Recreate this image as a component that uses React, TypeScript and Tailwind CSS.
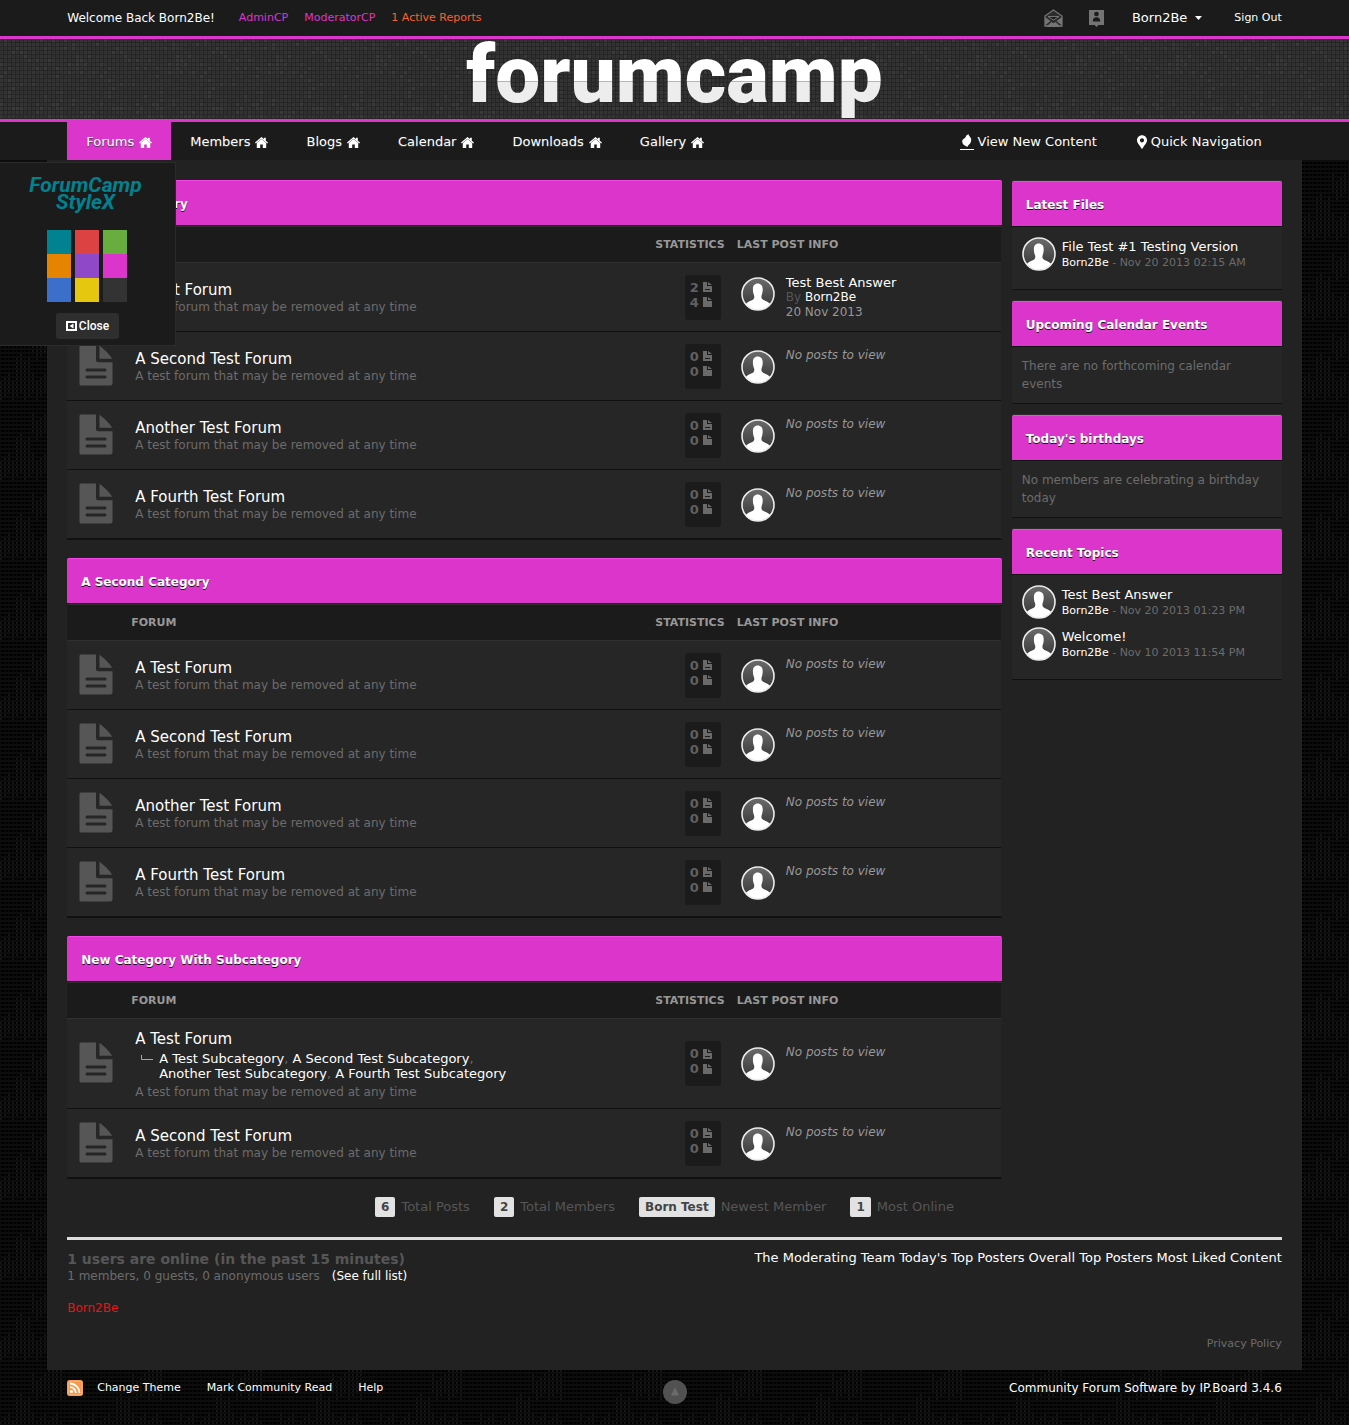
import type { ReactNode } from "react";
import { FaMapMarkerAlt } from "react-icons/fa";

interface Forum {
  name: string;
  subs?: string[];
  topics?: number;
  replies?: number;
  lastPost?: { title: string; author: string; date: string };
}

interface Category {
  title: string;
  forums: Forum[];
}

const DESCRIPTION = "A test forum that may be removed at any time";

const CATEGORIES: Category[] = [
  {
    title: "A Test Category",
    forums: [
      {
        name: "A Test Forum",
        topics: 2,
        replies: 4,
        lastPost: { title: "Test Best Answer", author: "Born2Be", date: "20 Nov 2013" },
      },
      { name: "A Second Test Forum" },
      { name: "Another Test Forum" },
      { name: "A Fourth Test Forum" },
    ],
  },
  {
    title: "A Second Category",
    forums: [
      { name: "A Test Forum" },
      { name: "A Second Test Forum" },
      { name: "Another Test Forum" },
      { name: "A Fourth Test Forum" },
    ],
  },
  {
    title: "New Category With Subcategory",
    forums: [
      {
        name: "A Test Forum",
        subs: [
          "A Test Subcategory",
          "A Second Test Subcategory",
          "Another Test Subcategory",
          "A Fourth Test Subcategory",
        ],
      },
      { name: "A Second Test Forum" },
    ],
  },
];

const NAV = ["Forums", "Members", "Blogs", "Calendar", "Downloads", "Gallery"];

const SWATCHES = [
  { name: "Teal", color: "bg-[#008290]" },
  { name: "Red", color: "bg-[#dc4242]" },
  { name: "Green", color: "bg-[#67ae3e]" },
  { name: "Orange", color: "bg-[#e68400]" },
  { name: "Purple", color: "bg-[#8f48c8]" },
  { name: "Pink", color: "bg-[#dc35cc]" },
  { name: "Blue", color: "bg-[#3c6fc9]" },
  { name: "Yellow", color: "bg-[#e6c70f]" },
  { name: "Dark", color: "bg-[#333333]" },
];

const STATS = [
  { value: "6", label: "Total Posts" },
  { value: "2", label: "Total Members" },
  { value: "Born Test", label: "Newest Member" },
  { value: "1", label: "Most Online" },
];

// Cheap repeatable noise for the two textures
function noise(x: number, y: number) {
  const n = Math.sin(x * 12.9898 + y * 78.233) * 43758.5453;
  return n - Math.floor(n);
}

const CELLS = Array.from({ length: 25 * 20 }, (_, i) => ({ x: i % 25, y: Math.floor(i / 25) }));

function HeaderTexture() {
  return (
    <svg className="absolute inset-0 w-full h-full" aria-hidden="true">
      <defs>
        <pattern id="tiles" width="100" height="80" patternUnits="userSpaceOnUse">
          <rect width="100" height="80" fill="#262626" />
          {CELLS.map(({ x, y }) => {
            const n = noise(x, y);
            return (
              <rect
                key={`${x}-${y}`}
                x={x * 4}
                y={y * 4}
                width="3"
                height="3"
                fill={n > 0.88 ? "#3a3a3a" : n > 0.5 ? "#343434" : "#313131"}
              />
            );
          })}
        </pattern>
      </defs>
      <rect width="100%" height="100%" fill="url(#tiles)" />
    </svg>
  );
}

function PageTexture() {
  return (
    <svg className="absolute inset-0 w-full h-full" aria-hidden="true">
      <defs>
        <pattern id="weave" width="100" height="80" patternUnits="userSpaceOnUse">
          <rect width="100" height="80" fill="#000" />
          {CELLS.map(({ x, y }) => {
            const lit = noise(Math.floor(x / 4) + 3, Math.floor((y + (x % 3)) / 5)) > 0.6;
            return (
              <g key={`${x}-${y}`}>
                <rect x={x * 4} y={y * 4} width="2" height="4" fill={lit ? "#151515" : "#080808"} />
                <rect x={x * 4} y={y * 4} width="4" height="2" fill="#0d0d0d" />
              </g>
            );
          })}
        </pattern>
      </defs>
      <rect width="100%" height="100%" fill="url(#weave)" />
    </svg>
  );
}

function Avatar() {
  return (
    <svg className="w-[34px] h-[34px] shrink-0" viewBox="0 0 34 34" aria-hidden="true">
      <defs>
        <linearGradient id="avatar-bg" x1="0" y1="0" x2="0" y2="1">
          <stop offset="0" stopColor="#6b6b6b" />
          <stop offset="1" stopColor="#333" />
        </linearGradient>
        <clipPath id="avatar-clip">
          <circle cx="17" cy="17" r="16" />
        </clipPath>
      </defs>
      <circle cx="17" cy="17" r="16" fill="url(#avatar-bg)" />
      <path
        clipPath="url(#avatar-clip)"
        d="M16.500 6.500c3.500 0 5.200 2.200 5.200 5.700 0 2.800-.5 4.600-1.200 6.600-.3 2.400.3 3.300 2 4.100 3.200 1.500 5.600 2.200 7.500 4.900V34H4v-6c1.500-2.700 4.100-3.600 7.300-5.100 1.700-.8 2.200-1.700 1.900-4.100-.8-2-1.300-3.800-1.300-6.600 0-3.500 1.700-5.700 4.600-5.700z"
        fill="#fff"
      />
      <circle cx="17" cy="17" r="16" fill="none" stroke="#ececec" strokeWidth="1.600" />
    </svg>
  );
}

function HomeIcon() {
  return (
    <svg className="w-[13px] h-[11px]" viewBox="0 0 13 11" fill="currentColor" aria-hidden="true">
      <path d="M6.500 0l2.500 2.100V.8h1.800v2.900L13 5.600l-.8.900L6.500 1.700.8 6.500 0 5.600z" />
      <path d="M6.500 2.100l4.700 3.900V11H7.800V7.400H5.200V11H1.800V6z" />
    </svg>
  );
}

function ForumIcon() {
  return (
    <svg className="block w-[34px] h-[41px] ml-3 mb-[2px]" viewBox="0 0 34 41" aria-hidden="true">
      <path
        d="M2 .5h15v14.700a2 2 0 0 0 2 2h14.500V38.500a2 2 0 0 1-2 2H2a1.500 1.500 0 0 1-1.500-1.500V2A1.500 1.500 0 0 1 2 .5z"
        fill="#565656"
      />
      <path d="M20.500 .8c4.500 3.300 9.400 8 12.700 12.900H20.500z" fill="#565656" />
      <path d="M8 25h18M8 32h18" stroke="#262626" strokeWidth="3" strokeLinecap="round" />
    </svg>
  );
}

function FileIcon({ lines }: { lines?: boolean }) {
  return (
    <svg className="w-[9px] h-[10px]" viewBox="0 0 9 10" aria-hidden="true">
      <path d="M0 0h4v4h5v6H0zM5 0l4 3H5z" fill="#6a6a6a" />
      {lines && <path d="M2 7.500h5" stroke="#1b1b1b" />}
    </svg>
  );
}

function StatLine({ value, lines }: { value: number; lines?: boolean }) {
  return (
    <span className="flex items-center gap-1 h-[15px] text-[13px] leading-[15px] font-bold text-[#606060]">
      {value}
      <FileIcon lines={lines} />
    </span>
  );
}

function SubForums({ subs }: { subs: string[] }) {
  return (
    <div className="flex items-start gap-[6px] mt-[3px] mb-[3px] ml-[6px] text-[13px] leading-[15px] text-[#6c6c6c]">
      <svg className="w-3 h-[15px] shrink-0" viewBox="0 0 12 15" aria-hidden="true">
        <path d="M.5 4v4.500H12" fill="none" stroke="#a8a8a8" />
      </svg>
      <div className="max-w-[360px]">
        {subs.map((sub, i) => (
          <span key={sub}>
            <a href="#" className="text-white whitespace-nowrap">{sub}</a>
            {i < subs.length - 1 && ", "}
          </span>
        ))}
      </div>
    </div>
  );
}

function ForumRow({ forum }: { forum: Forum }) {
  const { name, subs, topics = 0, replies = 0, lastPost } = forum;
  return (
    <tr>
      <td className="h-[69px] border-b border-[#111]">
        <ForumIcon />
      </td>
      <td className="px-[10px] pt-[2px] border-b border-[#111]">
        <h4 className="text-[15px] leading-[18px] text-white">
          <a href="#">{name}</a>
        </h4>
        {subs && <SubForums subs={subs} />}
        <p className="text-[12px] leading-4 text-[#6c6c6c]">{DESCRIPTION}</p>
      </td>
      <td className={subs ? "h-[90px] px-[10px] border-b border-[#111]" : "px-[10px] border-b border-[#111]"}>
        <div className="w-9 h-[45px] ml-auto pl-[5px] pt-[5px] rounded-[3px] bg-[#1b1b1b]">
          <StatLine value={topics} lines />
          <StatLine value={replies} />
        </div>
      </td>
      <td className="px-[10px] border-b border-[#111]">
        <div className="flex items-start gap-[11px]">
          <div className="mt-[2px] mb-px">
            <Avatar />
          </div>
          {lastPost ? (
            <div className="text-[12px] leading-[15px] text-[#989898]">
              <a href="#" className="block text-[13px] text-white">{lastPost.title}</a>
              <p className="text-[#565656]">
                By <a href="#" className="text-white">{lastPost.author}</a>
              </p>
              <p>{lastPost.date}</p>
            </div>
          ) : (
            <em className="text-[12px] leading-[15px] text-[#989898]">No posts to view</em>
          )}
        </div>
      </td>
    </tr>
  );
}

function BarTitle({ children }: { children: ReactNode }) {
  return (
    <h3 className="h-[45px] px-[14px] rounded-t-[2px] border-t border-[#f545e6] bg-[#dc35cc] text-[12px] leading-[46px] font-bold text-white [text-shadow:0_1px_0_#111]">
      {children}
    </h3>
  );
}

function CategoryTable({ category }: { category: Category }) {
  const th = "h-9 px-[6px] pt-[2px] border-b border-[#303030] text-[11px] font-bold text-[#989898]";
  return (
    <section>
      <BarTitle>{category.title}</BarTitle>
      <div className="border-t border-b border-t-[#111] border-b-[#111]">
        <table className="w-full table-fixed border-separate border-spacing-0 border-t border-r border-t-[#2d2d2d] border-r-[#222] bg-[#262626]">
          <thead className="bg-[#1b1b1b]">
            <tr>
              <th className={`w-[58px] ${th}`} aria-label="Status" />
              <th className={`text-left ${th}`}>FORUM</th>
              <th className={`w-[100px] text-right ${th}`}>STATISTICS</th>
              <th className={`w-[270px] text-left ${th}`}>LAST POST INFO</th>
            </tr>
          </thead>
          <tbody>
            {category.forums.map((forum) => (
              <ForumRow key={forum.name} forum={forum} />
            ))}
          </tbody>
        </table>
      </div>
    </section>
  );
}

function Widget({ title, children }: { title: string; children: ReactNode }) {
  return (
    <section className="border-t border-[#2d2d2d]">
      <BarTitle>{title}</BarTitle>
      <div className="p-[10px] border-y border-[#111] bg-[#262626] text-[12px] leading-[18px] text-[#6c6c6c]">
        {children}
      </div>
    </section>
  );
}

function Entry({ title, date }: { title: string; date: string }) {
  return (
    <div className="flex gap-[6px] mb-2">
      <Avatar />
      <div className="h-[34px] pt-[2px]">
        <a href="#" className="block text-[13px] leading-4 text-white">{title}</a>
        <p className="text-[11px] leading-4">
          <a href="#" className="text-white">Born2Be</a> - {date}
        </p>
      </div>
    </div>
  );
}

function TopBar() {
  return (
    <div className="bg-[#1b1b1b] border-b-[3px] border-[#dc35cc]">
      <div className="w-[93%] mx-auto px-5 h-9 flex items-center justify-between">
        <div className="flex items-center text-[11px]">
          <span className="mr-6 text-[12px] text-white">Welcome Back Born2Be!</span>
          <a href="#" className="mr-4 text-[#dc35cc]">AdminCP</a>
          <a href="#" className="mr-4 text-[#dc35cc]">ModeratorCP</a>
          <a href="#" className="text-[#f8622c]">1 Active Reports</a>
        </div>
        <div className="flex items-center text-white">
          <button type="button" aria-label="Messages" className="mr-[26px]">
            <svg className="w-[19px] h-[19px]" viewBox="0 0 19 19">
              <path d="M1 7L9.500 1 18 7V17H1z" fill="#2c2c2c" stroke="#747474" strokeWidth="1.300" />
              <path d="M4 7.500h11l-5.500 3.500z" fill="#1b1b1b" stroke="#747474" />
              <path d="M1 8l5.500 4L1 16.500zM18 8l-5.500 4 5.500 4.500zM2 18l5.500-5 2 1.300 2-1.300 5.500 5z" fill="#747474" />
            </svg>
          </button>
          <button type="button" aria-label="Notifications" className="mr-7">
            <svg className="w-[15px] h-[18px]" viewBox="0 0 15 18">
              <path d="M0 1h15v15h-5.500l-2 2-2-2H0z" fill="#747474" />
              <circle cx="7.500" cy="5" r="2.300" fill="#1b1b1b" />
              <path d="M3.800 12.500c0-3 1.300-4.300 3.700-4.300s3.700 1.300 3.700 4.300z" fill="#1b1b1b" />
            </svg>
          </button>
          <button type="button" className="flex items-center gap-2 mr-8 text-[13px]">
            Born2Be
            <svg className="w-[7px] h-1" viewBox="0 0 7 4" aria-hidden="true">
              <path d="M0 0h7L3.500 4z" fill="#fff" />
            </svg>
          </button>
          <a href="#" className="text-[11px]">Sign Out</a>
        </div>
      </div>
    </div>
  );
}

function NavBar() {
  return (
    <nav className="bg-[#1b1b1b] text-[13px] leading-9 text-white">
      <div className="w-[93%] mx-auto px-5 flex justify-between">
        <div className="flex">
          {NAV.map((item, i) => (
            <a
              key={item}
              href="#"
              className={
                "flex items-center gap-[5px] px-[19px] pt-[2px] [text-shadow:0_1px_1px_#444] " +
                (i === 0 ? "bg-[#dc35cc]" : "")
              }
            >
              {item}
              <HomeIcon />
            </a>
          ))}
        </div>
        <div className="flex">
          <a href="#" className="flex items-center gap-1 px-5 pt-[2px]">
            <svg className="w-[14px] h-4" viewBox="0 0 14 16" aria-hidden="true">
              <path
                d="M8.500 0c-.3 1.800 3.200 3.200 2.700 6.500-.3 2.600-2 4-3.500 5.500C8 13 7 13 6.500 12.500 4 11.500 2 9.500 2.200 7.200 2.500 4.500 6 4.500 6 1.800 6.800 1.500 7.800.9 8.500 0z"
                fill="#fff"
              />
              <path d="M0 15.500h14" stroke="#fff" />
            </svg>
            View New Content
          </a>
          <a href="#" className="flex items-center gap-1 px-5 pt-[2px]">
            <FaMapMarkerAlt className="w-[10px]" size={14} />
            Quick Navigation
          </a>
        </div>
      </div>
    </nav>
  );
}

function StylePanel() {
  return (
    <aside className="absolute left-0 top-[162px] w-[176px] h-[184px] pt-[14px] border border-l-0 border-[#2b2b2b] bg-[#1b1b1b] flex flex-col items-center font-[Roboto,sans-serif]">
      <p className="mr-1 text-center text-[21px] leading-[17px] font-bold italic text-[#008290]">
        ForumCamp
        <br />
        StyleX
      </p>
      <div className="mt-[19px] mr-px grid grid-cols-3 gap-x-1">
        {SWATCHES.map((s) => (
          <button key={s.name} type="button" aria-label={s.name} className={`w-6 h-6 ${s.color}`} />
        ))}
      </div>
      <button
        type="button"
        className="mt-[11px] h-[26px] px-[10px] rounded-[3px] bg-[#2e2e2e] flex items-center gap-[2px] text-[12px] font-medium text-white"
      >
        <svg className="w-[11px] h-[10px]" viewBox="0 0 11 10" aria-hidden="true">
          <rect x="1" y="1" width="9" height="8" fill="none" stroke="#fff" strokeWidth="2" />
          <path d="M7.500 2.500v5L3.500 5z" fill="#fff" />
        </svg>
        Close
      </button>
    </aside>
  );
}

export default function App() {
  return (
    <div className="relative isolate min-h-screen bg-black font-['DejaVu_Sans',sans-serif]">
      <div className="absolute inset-0 -z-10">
        <PageTexture />
      </div>

      <TopBar />

      <header className="relative h-[83px] border-b-[3px] border-[#dc35cc]">
        <HeaderTexture />
        <h1 className="relative text-center font-[Roboto,sans-serif] text-[80px] leading-[72px] font-black">
          <span className="bg-[linear-gradient(#fff_0_53px,#b5b5b5_53px_54px,#ededed_54px)] bg-clip-text text-transparent">
            forumcamp
          </span>
        </h1>
      </header>

      <NavBar />

      <main className="w-[93%] mx-auto px-5 pt-5 bg-[#222]">
        <div className="flex items-start gap-[10px]">
          <div className="flex-1 flex flex-col gap-[18px]">
            {CATEGORIES.map((category) => (
              <CategoryTable key={category.title} category={category} />
            ))}
          </div>
          <div className="w-[270px] shrink-0 flex flex-col gap-[10px]">
            <Widget title="Latest Files">
              <Entry title="File Test #1 Testing Version" date="Nov 20 2013 02:15 AM" />
            </Widget>
            <Widget title="Upcoming Calendar Events">There are no forthcoming calendar events</Widget>
            <Widget title="Today's birthdays">No members are celebrating a birthday today</Widget>
            <Widget title="Recent Topics">
              <Entry title="Test Best Answer" date="Nov 20 2013 01:23 PM" />
              <Entry title="Welcome!" date="Nov 10 2013 11:54 PM" />
            </Widget>
          </div>
        </div>

        <ul className="mt-[18px] mb-5 pr-5 flex justify-center gap-6 text-[13px] leading-5 text-[#565656]">
          {STATS.map((s) => (
            <li key={s.label} className="flex gap-[6px]">
              <span className="px-[6px] rounded-[2px] bg-[#e2e2e2] text-[12px] leading-5 font-bold text-[#444]">{s.value}</span>
              {s.label}
            </li>
          ))}
        </ul>

        <div className="border-t-[3px] border-[#ddd] pt-[10px] flex justify-between text-[12px] leading-4 text-[#6c6c6c]">
          <div>
            <h4 className="text-[14px] leading-[18px] font-bold text-[#565656]">
              1 users are online (in the past 15 minutes)
            </h4>
            <p>
              1 members, 0 guests, 0 anonymous users
              <a href="#" className="ml-3 text-white">(See full list)</a>
            </p>
            <a href="#" className="block mt-4 text-[#ee1111]">Born2Be</a>
          </div>
          <div className="flex gap-1 text-[13px] text-white">
            <a href="#">The Moderating Team</a>
            <a href="#">Today's Top Posters</a>
            <a href="#">Overall Top Posters</a>
            <a href="#">Most Liked Content</a>
          </div>
        </div>
        <p className="pt-5 pb-[18px] text-right text-[11px] leading-4 text-[#6c6c6c]">
          <a href="#">Privacy Policy</a>
        </p>
      </main>

      <footer className="w-[93%] mx-auto px-5 h-[55px] pt-[10px] grid grid-cols-[1fr_auto_1fr] items-start text-[11px] leading-4 text-white">
        <div className="flex items-center gap-[26px]">
          <span className="flex items-center gap-[14px]">
            <a href="#" aria-label="RSS feed">
              <svg className="w-4 h-4" viewBox="0 0 16 16">
                <rect width="16" height="16" rx="2.500" fill="#f0873c" />
                <rect x="1" y="1" width="14" height="14" rx="2" fill="#f59a4c" stroke="#f9b985" />
                <circle cx="4.500" cy="11.500" r="1.600" fill="#fff" />
                <path d="M3 7.200a5.800 5.800 0 0 1 5.800 5.800M3 3.500A9.500 9.500 0 0 1 12.500 13" fill="none" stroke="#fff" strokeWidth="1.800" />
              </svg>
            </a>
            <a href="#">Change Theme</a>
          </span>
          <a href="#">Mark Community Read</a>
          <a href="#">Help</a>
        </div>
        <a href="#" aria-label="Back to top">
          <svg className="w-6 h-6" viewBox="0 0 24 24">
            <circle cx="12" cy="12" r="12" fill="#515151" />
            <path d="M12 7l4 8.500H8z" fill="#6a6a6a" />
          </svg>
        </a>
        <a href="#" className="text-right text-[12px]">Community Forum Software by IP.Board 3.4.6</a>
      </footer>

      <StylePanel />
    </div>
  );
}
